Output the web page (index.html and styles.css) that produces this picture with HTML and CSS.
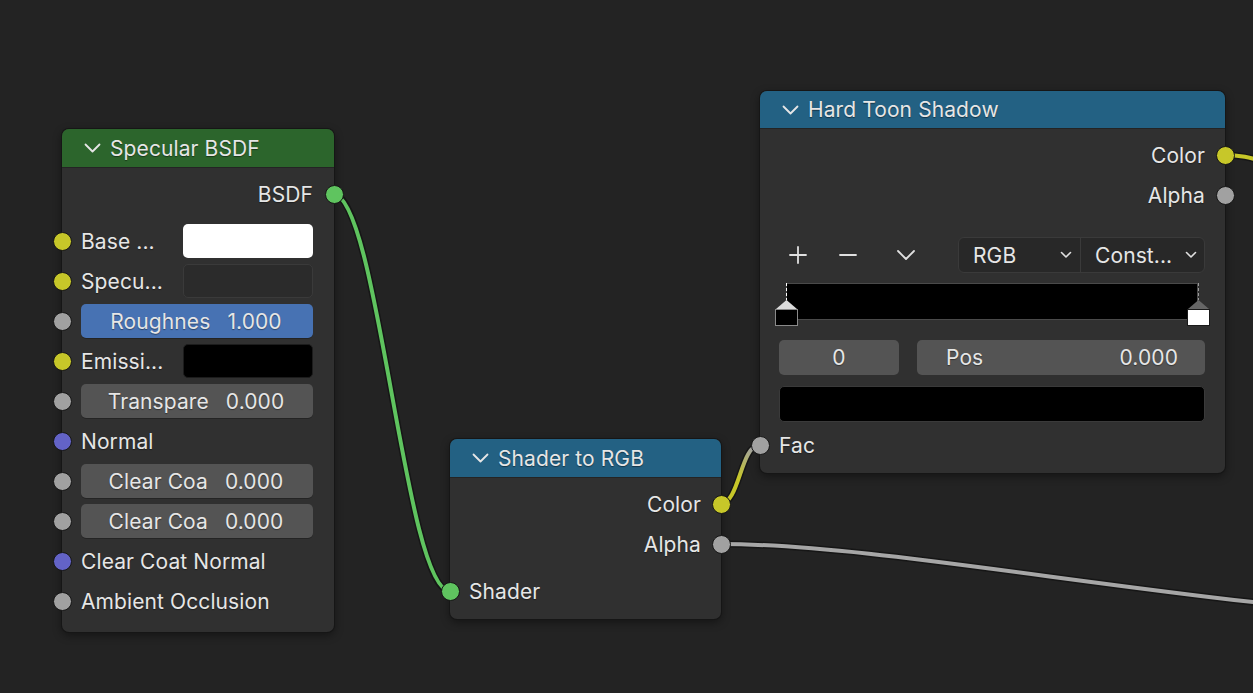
FILE: index.html
```html
<!DOCTYPE html>
<html>
<head>
<meta charset="utf-8">
<link rel="stylesheet" href="styles.css">
</head>
<body>
<div class="canvas">
  <svg class="links" width="1253" height="693" viewBox="0 0 1253 693">
    <defs>
      <linearGradient id="yg" gradientUnits="userSpaceOnUse" x1="720" y1="504" x2="760" y2="445">
        <stop offset="0" stop-color="#c7c729"/>
        <stop offset="0.45" stop-color="#c7c729"/>
        <stop offset="0.9" stop-color="#a1a1a1"/>
      </linearGradient>
    </defs>
    <g fill="none" stroke-linecap="round">
      <path class="wire-o" d="M333 194 C378 194 405 591 450 591"/>
      <path d="M333 194 C378 194 405 591 450 591" stroke="#5fc45f" stroke-width="4"/>
      <path class="wire-o" d="M720 504 C740 504 740 445 760 445"/>
      <path d="M720 504 C740 504 740 445 760 445" stroke="url(#yg)" stroke-width="4"/>
      <path class="wire-o" d="M720 544 C900 544 1200 610 1500 622"/>
      <path d="M720 544 C900 544 1200 610 1500 622" stroke="#a6a6a6" stroke-width="4"/>
      <path class="wire-o" d="M1224 155 C1250 155 1260 162 1300 170"/>
      <path d="M1224 155 C1250 155 1260 162 1300 170" stroke="#c7c729" stroke-width="4"/>
    </g>
  </svg>

  <!-- Specular BSDF -->
  <div class="node node-spec">
    <div class="head head-green">
      <svg class="chev" width="17" height="10" viewBox="0 0 17 10"><path d="M1.5 1.5 L8.5 8.5 L15.5 1.5" fill="none" stroke="#e6e6e6" stroke-width="1.8" stroke-linecap="round" stroke-linejoin="round"/></svg>
      <span>Specular BSDF</span>
    </div>
    <div class="body body-spec">
      <div class="row out"><span>BSDF</span><i class="sock r green"></i></div>
      <div class="row first-in"><i class="sock l yellow"></i><span class="lab">Base ...</span><div class="swatch white"></div></div>
      <div class="row"><i class="sock l yellow"></i><span class="lab">Specu...</span><div class="swatch empty"></div></div>
      <div class="row"><i class="sock l grey"></i><div class="slider active"><span>Roughnes</span><span>1.000</span></div></div>
      <div class="row"><i class="sock l yellow"></i><span class="lab">Emissi...</span><div class="swatch black"></div></div>
      <div class="row"><i class="sock l grey"></i><div class="slider"><span>Transpare</span><span>0.000</span></div></div>
      <div class="row"><i class="sock l purple"></i><span class="lab">Normal</span></div>
      <div class="row"><i class="sock l grey"></i><div class="slider"><span>Clear Coa</span><span>0.000</span></div></div>
      <div class="row"><i class="sock l grey"></i><div class="slider"><span>Clear Coa</span><span>0.000</span></div></div>
      <div class="row"><i class="sock l purple"></i><span class="lab">Clear Coat Normal</span></div>
      <div class="row"><i class="sock l grey"></i><span class="lab">Ambient Occlusion</span></div>
    </div>
  </div>

  <!-- Shader to RGB -->
  <div class="node node-s2r">
    <div class="head head-blue">
      <svg class="chev" width="17" height="10" viewBox="0 0 17 10"><path d="M1.5 1.5 L8.5 8.5 L15.5 1.5" fill="none" stroke="#e6e6e6" stroke-width="1.8" stroke-linecap="round" stroke-linejoin="round"/></svg>
      <span>Shader to RGB</span>
    </div>
    <div class="body body-s2r">
      <div class="row out"><span>Color</span><i class="sock r yellow"></i></div>
      <div class="row out"><span>Alpha</span><i class="sock r grey"></i></div>
      <div class="row shader-in"><i class="sock l green"></i><span class="lab">Shader</span></div>
    </div>
  </div>

  <!-- Hard Toon Shadow -->
  <div class="node node-toon">
    <div class="head head-blue head-toon">
      <svg class="chev" width="17" height="10" viewBox="0 0 17 10"><path d="M1.5 1.5 L8.5 8.5 L15.5 1.5" fill="none" stroke="#e6e6e6" stroke-width="1.8" stroke-linecap="round" stroke-linejoin="round"/></svg>
      <span>Hard Toon Shadow</span>
    </div>
    <div class="body body-toon">
      <div class="row out"><span>Color</span><i class="sock r yellow"></i></div>
      <div class="row out"><span>Alpha</span><i class="sock r grey"></i></div>
      <div class="tools">
        <span class="tool t-plus"><svg width="20" height="20" viewBox="0 0 20 20"><path d="M10 2 V18 M2 10 H18" stroke="#e0e0e0" stroke-width="1.8" stroke-linecap="round"/></svg></span>
        <span class="tool t-minus"><svg width="20" height="20" viewBox="0 0 20 20"><path d="M2 10 H18" stroke="#e0e0e0" stroke-width="1.8" stroke-linecap="round"/></svg></span>
        <span class="tool t-chev"><svg width="20" height="12" viewBox="0 0 20 12"><path d="M2 2 L10 10 L18 2" fill="none" stroke="#e0e0e0" stroke-width="1.8" stroke-linecap="round" stroke-linejoin="round"/></svg></span>
        <div class="dropgroup">
          <div class="drop d-rgb"><span>RGB</span><svg width="12" height="8" viewBox="0 0 12 8"><path d="M1.5 1.5 L6 6 L10.5 1.5" fill="none" stroke="#e0e0e0" stroke-width="1.6" stroke-linecap="round" stroke-linejoin="round"/></svg></div>
          <div class="drop d-const"><span>Const...</span><svg width="12" height="8" viewBox="0 0 12 8"><path d="M1.5 1.5 L6 6 L10.5 1.5" fill="none" stroke="#e0e0e0" stroke-width="1.6" stroke-linecap="round" stroke-linejoin="round"/></svg></div>
        </div>
      </div>
      <svg class="ramp" width="437" height="44" viewBox="0 0 437 44">
        <rect x="12.5" y="0.5" width="411" height="36" fill="#000" stroke="#4a4a4a"/>
        <path d="M12.5 0 V17" stroke="#ffffff" stroke-width="1" stroke-dasharray="3 2"/>
        <path d="M424.5 0 V17" stroke="#9a9a9a" stroke-width="1" stroke-dasharray="3 2"/>
        <path d="M12.5 17 L2 26 L23 26 Z" fill="#dcdcdc"/>
        <rect x="1.5" y="26.5" width="22" height="16" fill="#000" stroke="#8a8a8a"/>
        <path d="M424.5 17 L414 26 L435 26 Z" fill="#666666"/>
        <rect x="413.5" y="26.5" width="22" height="16" fill="#ffffff" stroke="#1a1a1a"/>
      </svg>
      <div class="fields">
        <div class="num idx">0</div>
        <div class="num pos"><span>Pos</span><span>0.000</span></div>
      </div>
      <div class="bigswatch"></div>
      <div class="row fac"><i class="sock l grey"></i><span class="lab">Fac</span></div>
    </div>
  </div>
</div>
</body>
</html>
```

FILE: styles.css
```css
* { box-sizing: border-box; }
html, body {
  margin: 0;
  padding: 0;
  background: #232323;
}
.canvas {
  position: relative;
  width: 1253px;
  height: 693px;
  overflow: hidden;
  background: #232323;
  font-family: Inter, "Noto Sans", sans-serif;
  font-size: 21px;
  letter-spacing: 0.1px;
  color: #e6e6e6;
}
.links {
  position: absolute;
  left: 0;
  top: 0;
  z-index: 0;
}
.wire-o {
  stroke: #161616;
  stroke-width: 7;
}
.node {
  position: absolute;
  z-index: 1;
  background: #303030;
  border-radius: 7px;
  box-shadow: 0 0 0 1px #161616, 0 3px 10px rgba(0,0,0,0.45);
}
.node-spec { left: 62px; top: 129px; width: 272px; }
.node-s2r { left: 450px; top: 439px; width: 271px; }
.node-toon { left: 760px; top: 91px; width: 465px; }

.head {
  height: 39px;
  display: flex;
  align-items: center;
  gap: 9px;
  padding-left: 22px;
  border-radius: 7px 7px 0 0;
  border-bottom: 1px solid #242424;
  text-shadow: 0 1px 1px rgba(0,0,0,0.45);
}
.head-toon { height: 38px; }
.head-green { background: #2c652c; }
.head-blue { background: #236183; }
.chev { display: block; flex: none; }

.body { display: flex; flex-direction: column; }
.body-spec { padding: 6px 21px 11px 19px; }
.body-s2r { padding: 6px 20px 8px 19px; }
.body-toon { padding: 6px 20px 8px 19px; }

.row {
  height: 40px;
  display: flex;
  align-items: center;
  position: relative;
  white-space: nowrap;
  text-shadow: 0 1px 1px rgba(0,0,0,0.4);
}
.row.out { justify-content: flex-end; }
.row.first-in { margin-top: 7px; }
.row.shader-in { margin-top: 7px; }
.lab { flex: 1; }

.sock {
  position: absolute;
  top: 50%;
  width: 19px;
  height: 19px;
  margin-top: -9.5px;
  border-radius: 50%;
  border: 1.5px solid #161616;
}
.body-spec .sock.l { left: -28.5px; }
.body-spec .sock.r { right: -30.5px; }
.body-s2r .sock.l { left: -28.5px; }
.body-s2r .sock.r { right: -29.5px; }
.body-toon .sock.l { left: -28.5px; }
.body-toon .sock.r { right: -29.5px; }
.yellow { background: #c7c729; }
.grey { background: #a1a1a1; }
.purple { background: #6363c7; }
.green { background: #5fc45f; }

.swatch {
  width: 130px;
  height: 34px;
  border-radius: 5px;
  flex: none;
}
.swatch.white { background: #ffffff; }
.swatch.empty { background: #2b2b2b; border: 1px solid #3a3a3a; }
.swatch.black { background: #000000; border: 1px solid #1c1c1c; }

.slider {
  flex: 1;
  height: 34px;
  border-radius: 5px;
  background: #545454;
  display: flex;
  align-items: center;
  justify-content: center;
  gap: 17px;
  padding-right: 2px;
  box-shadow: 0 1px 0 rgba(0,0,0,0.25);
}
.slider.active { background: #4772b3; }

.tools {
  margin-top: 22px;
  height: 36px;
  display: flex;
  align-items: center;
}
.tool { display: flex; align-items: center; justify-content: center; }
.tool svg { display: block; }
.t-plus { width: 38px; }
.t-minus { width: 38px; margin-left: 12px; }
.t-chev { width: 38px; margin-left: 20px; }
.dropgroup {
  margin-left: auto;
  width: 247px;
  height: 36px;
  display: flex;
  background: #282828;
  border: 1px solid #3a3a3a;
  border-radius: 6px;
}
.drop {
  display: flex;
  align-items: center;
  justify-content: space-between;
  height: 100%;
}
.d-rgb { width: 122px; padding: 0 8px 0 14px; border-right: 1px solid #3a3a3a; }
.d-const { flex: 1; padding: 0 7px 0 14px; }
.drop svg { display: block; }

.ramp {
  display: block;
  margin-top: 10px;
  margin-left: -5px;
}
.fields {
  margin-top: 13px;
  height: 35px;
  display: flex;
  gap: 18px;
}
.num {
  height: 35px;
  border-radius: 5px;
  background: #545454;
  display: flex;
  align-items: center;
  text-shadow: 0 1px 1px rgba(0,0,0,0.4);
}
.idx { width: 120px; justify-content: center; }
.pos { flex: 1; justify-content: space-between; padding: 0 27px 0 29px; }
.bigswatch {
  margin-top: 11px;
  height: 36px;
  border-radius: 5px;
  background: #000;
  border: 1px solid #3a3a3a;
}
.row.fac { margin-top: 3px; }
```
